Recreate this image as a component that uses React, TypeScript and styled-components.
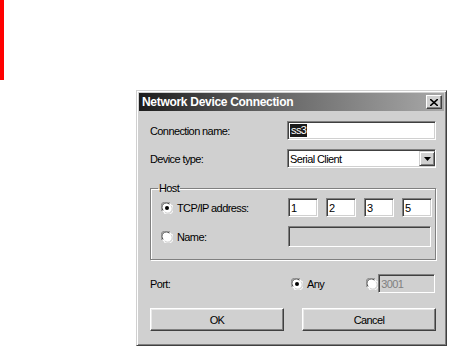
import React from 'react';
import styled, { createGlobalStyle } from 'styled-components';

const GlobalStyle = createGlobalStyle`
  html, body {
    margin: 0;
    padding: 0;
    background: #ffffff;
  }
  body {
    font-family: "Liberation Sans", Arial, sans-serif;
    font-size: 11px;
    letter-spacing: -0.6px;
    color: #000000;
  }
`;

const Page = styled.div`
  width: 449px;
  height: 347px;
  overflow: hidden;
  position: relative;
`;

const RedBar = styled.div`
  width: 4px;
  height: 80px;
  background: #ff0000;
`;

const Window = styled.div`
  margin: 10px 0 0 136px;
  width: 311px;
  height: 256px;
  box-sizing: border-box;
  background: #d0d0d0;
  border-top: 1px solid #d0d0d0;
  border-left: 1px solid #d0d0d0;
  border-right: 1px solid #404040;
  border-bottom: 1px solid #404040;
  box-shadow: inset 1px 1px 0 #ffffff, inset -1px -1px 0 #808080;
  padding: 2px;
  display: flex;
  flex-direction: column;
`;

const TitleBar = styled.div`
  height: 18px;
  display: flex;
  align-items: center;
  justify-content: space-between;
  padding: 0 2px 0 3px;
  background: linear-gradient(to right, #1c1c1c 0%, #5a5a5a 35%, #a8a8a8 100%);
`;

const Title = styled.span`
  color: #ffffff;
  font-weight: bold;
  font-size: 12px;
  letter-spacing: -0.3px;
`;

const CloseButton = styled.div`
  width: 16px;
  height: 14px;
  box-sizing: border-box;
  background: #d0d0d0;
  border-top: 1px solid #ffffff;
  border-left: 1px solid #ffffff;
  border-right: 1px solid #404040;
  border-bottom: 1px solid #404040;
  box-shadow: inset -1px -1px 0 #808080;
  display: flex;
  align-items: center;
  justify-content: center;
`;

const Body = styled.div`
  padding: 10px 8px 0 11px;
  display: flex;
  flex-direction: column;
`;

const FieldRow = styled.div<{ $mt?: number; $h?: number }>`
  display: flex;
  align-items: center;
  height: ${(p) => p.$h ?? 19}px;
  margin-top: ${(p) => p.$mt ?? 0}px;
`;

const Label = styled.span<{ $w?: number }>`
  width: ${(p) => p.$w ?? 137}px;
  flex: none;
  white-space: nowrap;
`;

const Sunken = styled.div<{ $w: number; $h?: number; $disabled?: boolean }>`
  width: ${(p) => p.$w}px;
  height: ${(p) => p.$h ?? 19}px;
  box-sizing: border-box;
  background: ${(p) => (p.$disabled ? '#d0d0d0' : '#ffffff')};
  color: ${(p) => (p.$disabled ? '#808080' : '#000000')};
  border-top: 1px solid #808080;
  border-left: 1px solid #808080;
  border-right: 1px solid #ffffff;
  border-bottom: 1px solid #ffffff;
  box-shadow: inset 1px 1px 0 #404040, inset -1px -1px 0 #d0d0d0;
  display: flex;
  align-items: center;
  padding-left: 2px;
  flex: none;
`;

const Selected = styled.span`
  background: #1a1a1a;
  color: #ffffff;
  padding: 0 1px;
  line-height: 13px;
`;

const SelectText = styled.span`
  flex: 1;
`;

const DropButton = styled.div`
  width: 16px;
  height: 15px;
  box-sizing: border-box;
  background: #d0d0d0;
  border-top: 1px solid #d0d0d0;
  border-left: 1px solid #d0d0d0;
  border-right: 1px solid #404040;
  border-bottom: 1px solid #404040;
  box-shadow: inset 1px 1px 0 #ffffff, inset -1px -1px 0 #808080;
  display: flex;
  align-items: center;
  justify-content: center;
`;

const Group = styled.fieldset`
  margin: 14px 0 0 0;
  padding: 4px 0 12px 10px;
  width: 286px;
  box-sizing: border-box;
  border: 1px solid #808080;
  box-shadow: 1px 1px 0 #ffffff, inset 1px 1px 0 #ffffff;
  display: flex;
  flex-direction: column;
  gap: 9px;
`;

const Legend = styled.legend`
  padding: 0 1px;
  margin-left: -3px;
  font-size: 11px;
`;

const RadioLabel = styled.label<{ $w?: number }>`
  display: flex;
  align-items: center;
  gap: 4px;
  width: ${(p) => (p.$w ? `${p.$w}px` : 'auto')};
  flex: none;
  white-space: nowrap;
`;

const IpGroup = styled.div`
  display: flex;
  gap: 8px;
`;

const PortRow = styled.div`
  display: flex;
  align-items: center;
  height: 19px;
  margin-top: 14px;
`;

const PortOther = styled.div`
  display: flex;
  align-items: center;
  gap: 0;
  margin-left: 42px;
`;

const ButtonRow = styled.div`
  display: flex;
  justify-content: space-between;
  width: 286px;
  margin-top: 15px;
`;

const Button = styled.div`
  width: 134px;
  height: 23px;
  box-sizing: border-box;
  background: #d0d0d0;
  border-top: 1px solid #ffffff;
  border-left: 1px solid #ffffff;
  border-right: 1px solid #404040;
  border-bottom: 1px solid #404040;
  box-shadow: inset -1px -1px 0 #808080, inset 1px 1px 0 #e8e8e8;
  display: flex;
  align-items: center;
  justify-content: center;
`;

const Radio: React.FC<{ checked?: boolean }> = ({ checked }) => (
  <svg width="12" height="12" viewBox="0 0 12 12">
    <circle cx="6" cy="6" r="5.5" fill="#ffffff" />
    <path d="M1.2 9 A5.3 5.3 0 0 1 9 1.2" stroke="#808080" strokeWidth="1" fill="none" />
    <path d="M2.2 8.4 A4.3 4.3 0 0 1 8.4 2.2" stroke="#404040" strokeWidth="1" fill="none" />
    <path d="M10.8 3 A5.3 5.3 0 0 1 3 10.8" stroke="#ffffff" strokeWidth="1" fill="none" />
    <path d="M9.8 3.6 A4.3 4.3 0 0 1 3.6 9.8" stroke="#d0d0d0" strokeWidth="1" fill="none" />
    {checked && <circle cx="6" cy="6" r="2" fill="#000000" />}
  </svg>
);

const App: React.FC = () => {
  const ip = ['1', '2', '3', '5'];
  return (
    <>
      <GlobalStyle />
      <Page>
        <RedBar />
        <Window>
          <TitleBar>
            <Title>Network Device Connection</Title>
            <CloseButton>
              <svg width="8" height="7" viewBox="0 0 8 7">
                <path d="M0 0 L8 7 M8 0 L0 7" stroke="#000" strokeWidth="1.6" />
              </svg>
            </CloseButton>
          </TitleBar>
          <Body>
            <FieldRow $mt={0}>
              <Label>Connection name:</Label>
              <Sunken $w={149}>
                <Selected>ss3</Selected>
              </Sunken>
            </FieldRow>
            <FieldRow $mt={9}>
              <Label>Device type:</Label>
              <Sunken $w={149}>
                <SelectText>Serial Client</SelectText>
                <DropButton>
                  <svg width="7" height="4" viewBox="0 0 7 4">
                    <path d="M0 0 H7 L3.5 4 Z" fill="#000" />
                  </svg>
                </DropButton>
              </Sunken>
            </FieldRow>
            <Group>
              <Legend>Host</Legend>
              <FieldRow>
                <RadioLabel $w={127}>
                  <Radio checked />
                  TCP/IP address:
                </RadioLabel>
                <IpGroup>
                  {ip.map((v) => (
                    <Sunken key={v} $w={30}>
                      {v}
                    </Sunken>
                  ))}
                </IpGroup>
              </FieldRow>
              <FieldRow $h={21}>
                <RadioLabel $w={127}>
                  <Radio />
                  Name:
                </RadioLabel>
                <Sunken $w={143} $h={21} $disabled />
              </FieldRow>
            </Group>
            <PortRow>
              <Label $w={141}>Port:</Label>
              <RadioLabel>
                <Radio checked />
                Any
              </RadioLabel>
              <PortOther>
                <Radio />
                <Sunken $w={57} $disabled>
                  3001
                </Sunken>
              </PortOther>
            </PortRow>
            <ButtonRow>
              <Button>OK</Button>
              <Button>Cancel</Button>
            </ButtonRow>
          </Body>
        </Window>
      </Page>
    </>
  );
};

export default App;
